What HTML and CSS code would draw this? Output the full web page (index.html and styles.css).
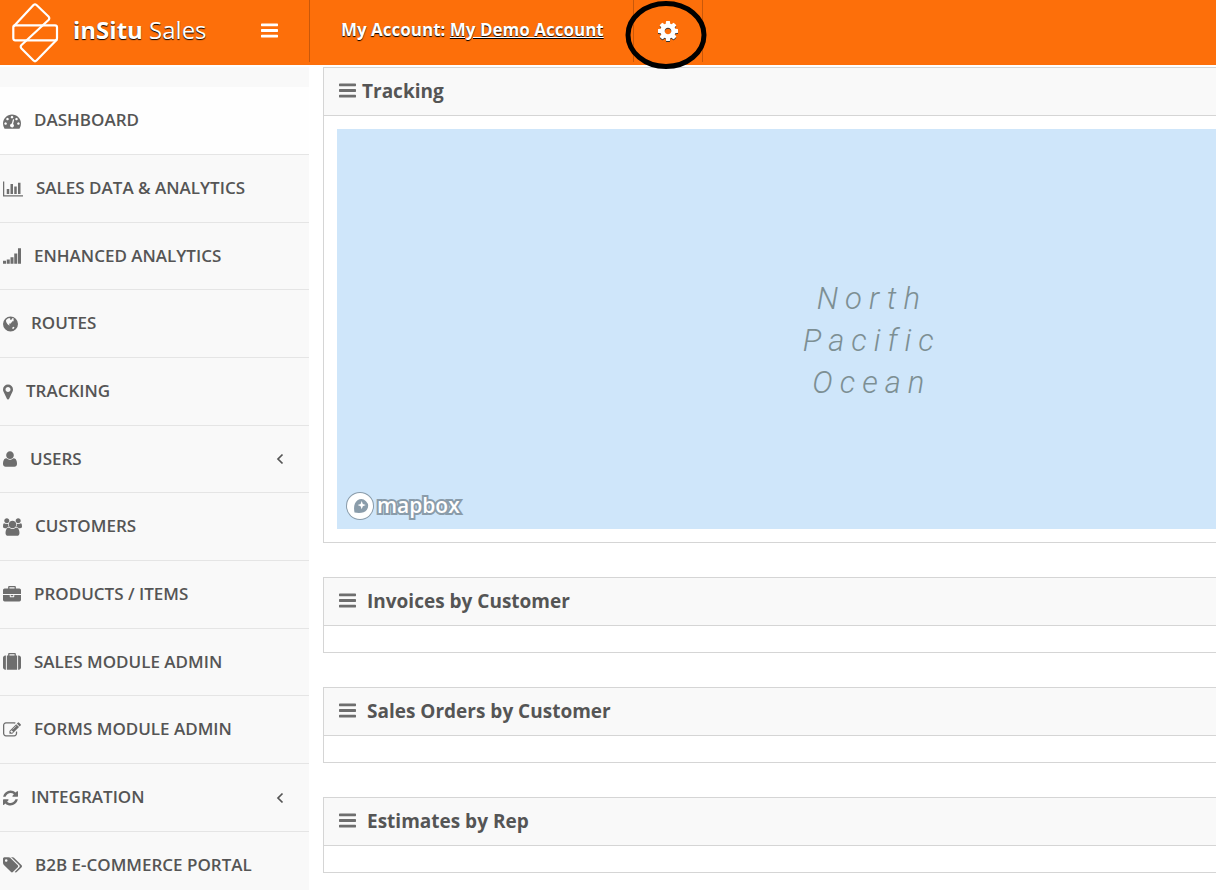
FILE: index.html
```html
<!DOCTYPE html>
<html lang="en">
<head>
<meta charset="utf-8">
<title>inSitu Sales</title>
<link rel="stylesheet" href="styles.css">
</head>
<body>
<svg class="sprite" aria-hidden="true">
  <symbol id="bars" viewBox="128 256 1536 1280"><path d="M1664 1344v128q0 26-19 45t-45 19h-1408q-26 0-45-19t-19-45v-128q0-26 19-45t45-19h1408q26 0 45 19t19 45zm0-512v128q0 26-19 45t-45 19h-1408q-26 0-45-19t-19-45v-128q0-26 19-45t45-19h1408q26 0 45 19t19 45zm0-512v128q0 26-19 45t-45 19h-1408q-26 0-45-19t-19-45v-128q0-26 19-45t45-19h1408q26 0 45 19t19 45z"/></symbol>
  <symbol id="angle" viewBox="0 0 8 12"><path d="M6.500 1.500 2 6l4.500 4.500" fill="none" stroke="currentColor" stroke-width="1.700"/></symbol>
</svg>

<header class="topbar">
  <div class="brand">
    <svg class="brand-logo" viewBox="0 0 48 60" aria-hidden="true"><g fill="none" stroke="#fff" stroke-width="2.200" stroke-linejoin="round" stroke-linecap="round"><path d="M3 23 22.500 2Q24 .8 25.500 2L37.500 13.500Q39 15.200 37.500 17L10.500 42Q9 43.700 10.500 45.500L22.500 57.500Q24 59 25.500 57.500L45.500 37"/><rect x="2.300" y="22.300" width="43.700" height="15" rx="2"/></g></svg>
    <a class="brand-name" href="#"><b>inSitu</b> Sales</a>
    <button class="menu-toggle" type="button" aria-label="Toggle menu"><svg class="bars" aria-hidden="true"><use href="#bars"/></svg></button>
  </div>
  <div class="account">My Account: <a href="#">My Demo Account</a></div>
  <button class="settings" type="button" aria-label="Settings">
    <svg class="cog" viewBox="128 128 1536 1536" aria-hidden="true"><path d="M1152 896q0-106-75-181t-181-75-181 75-75 181 75 181 181 75 181-75 75-181zm512-109v222q0 12-8 23t-20 13l-185 28q-19 54-39 91 35 50 107 138 10 12 10 25t-9 23q-27 37-99 108t-94 71q-12 0-26-9l-138-108q-44 23-91 38-16 136-29 186-7 28-36 28h-222q-14 0-24.500-8.500t-11.500-21.500l-28-184q-49-16-90-37l-141 107q-10 9-25 9-14 0-25-11-126-114-165-168-7-10-7-23 0-12 8-23 15-21 51-66.500t54-70.500q-27-50-41-99l-183-27q-13-2-21-12.500t-8-23.500v-222q0-12 8-23t19-13l186-28q14-46 39-92-40-57-107-138-10-12-10-24 0-10 9-23 26-36 98.500-107.500t94.500-71.500q13 0 26 10l138 107q44-23 91-38 16-136 29-186 7-28 36-28h222q14 0 24.500 8.500t11.500 21.500l28 184q49 16 90 37l142-107q9-9 24-9 13 0 25 10 129 119 165 170 7 8 7 22 0 12-8 23-15 21-51 66.500t-54 70.500q26 50 41 98l183 28q13 2 21 12.500t8 23.500z"/></svg>
    <svg class="marker-ring" viewBox="0 0 82 70" aria-hidden="true"><ellipse cx="41" cy="35" rx="38" ry="31.500" fill="none" stroke="#000" stroke-width="5"/></svg>
  </button>
</header>

<div class="layout">
  <nav class="sidebar" aria-label="Main">
    <ul class="menu">
      <li class="menu-item active"><a href="#"><svg class="icon w18" viewBox="0 0 1792 1792"><path d="M384 1152q0-53-37.500-90.500t-90.500-37.500-90.500 37.500-37.500 90.500 37.500 90.500 90.500 37.500 90.500-37.500 37.500-90.500zm192-448q0-53-37.500-90.500t-90.500-37.500-90.500 37.500-37.500 90.500 37.500 90.500 90.500 37.500 90.500-37.500 37.500-90.500zm428 481l101-382q6-26-7.500-48.500t-38.500-29.500-48 6.500-30 39.500l-101 382q-60 5-107 43.500t-63 98.500q-20 77 20 146t117 89 146-20 89-117q16-60-6-117t-72-91zm660-33q0-53-37.500-90.500t-90.500-37.500-90.500 37.500-37.500 90.500 37.500 90.500 90.500 37.500 90.500-37.500 37.500-90.500zm-640-640q0-53-37.500-90.500t-90.500-37.500-90.500 37.500-37.500 90.500 37.500 90.500 90.500 37.500 90.500-37.500 37.500-90.500zm448 192q0-53-37.500-90.500t-90.500-37.500-90.500 37.500-37.500 90.500 37.500 90.500 90.500 37.500 90.500-37.500 37.500-90.500zm320 448q0 261-141 483-19 29-54 29h-1402q-35 0-54-29-141-221-141-483 0-182 71-348t191-286 286-191 348-71 348 71 286 191 191 286 71 348z"/></svg><span>DASHBOARD</span></a></li>
      <li class="menu-item"><a href="#"><svg class="icon w20" viewBox="0 0 2048 1792"><path d="M640 896v512h-256v-512h256zm384-512v1024h-256v-1024h256zm1024 1152v128h-2048v-1536h128v1408h1920zm-640-896v768h-256v-768h256zm384-384v1152h-256v-1152h256z"/></svg><span>SALES DATA &amp; ANALYTICS</span></a></li>
      <li class="menu-item"><a href="#"><svg class="icon w18" viewBox="0 0 1792 1792"><path d="M0 1360h300v304H0zM373 1250h300v414H373zM746 1024h300v640H746zM1119 640h300v1024h-300zM1492 128h300v1536h-300z"/></svg><span>ENHANCED ANALYTICS</span></a></li>
      <li class="menu-item"><a href="#"><svg class="icon w15" viewBox="128 0 1536 1792"><path fill-rule="evenodd" d="M896 128a768 768 0 1 0 0 1536 768 768 0 0 0 0-1536zM440 480 620 340 780 270 880 350 850 440 960 480 1080 300 1180 290 1230 380 1190 480 1240 590 1130 640 1070 590 1050 710 940 760 900 860 780 850 740 930 820 1010 760 1050 600 930 510 790 440 650zM1080 1260 1220 1180 1300 1240 1220 1390 1100 1410z"/></svg><span>ROUTES</span></a></li>
      <li class="menu-item"><a href="#"><svg class="icon w10" viewBox="384 0 1024 1792"><path d="M1152 640q0-106-75-181t-181-75-181 75-75 181 75 181 181 75 181-75 75-181zm256 0q0 109-33 179l-364 774q-16 33-47.500 52t-67.500 19-67.500-19-46.500-52l-365-774q-33-70-33-179 0-212 150-362t362-150 362 150 150 362z"/></svg><span>TRACKING</span></a></li>
      <li class="menu-item"><a href="#"><svg class="icon w14" viewBox="192 0 1408 1792"><path d="M1600 1405q0 120-73 189.500t-194 69.500H459q-121 0-194-69.500T192 1405q0-53 3.500-103.500t14-109T236 1084t43-97.500 62-81 85.500-53.500T538 832q9 0 42 21.500t74.500 48 108 48T896 971t133.500-21.500 108-48 74.500-48 42-21.500q61 0 111.500 20t85.500 53.500 62 81 43 97.500 26.500 108.500 14 109 3.500 103.500zM1280 512q0 159-112.500 271.500T896 896 624.500 783.500 512 512t112.500-271.500T896 128t271.500 112.500T1280 512z"/></svg><span>USERS</span><svg class="angle" aria-hidden="true"><use href="#angle"/></svg></a></li>
      <li class="menu-item"><a href="#"><svg class="icon w19" viewBox="-64 0 1920 1792"><path d="M529 896q-162 5-265 128h-134q-82 0-138-40.500t-56-118.500q0-353 124-353 6 0 43.500 21t97.500 42.500 119 21.500q67 0 133-23-5 37-5 66 0 139 81 256zm1071 637q0 120-73 189.500t-194 69.500h-874q-121 0-194-69.500t-73-189.500q0-53 3.500-103.500t14-109 26.500-108.500 43-97.500 62-81 85.500-53.500 111.500-20q10 0 43 21.500t73 48 107 48 135 21.500 135-21.500 107-48 73-48 43-21.500q61 0 111.500 20t85.500 53.500 62 81 43 97.500 26.500 108.500 14 109 3.500 103.500zm-1024-1277q0 106-75 181t-181 75-181-75-75-181 75-181 181-75 181 75 75 181zm704 384q0 159-112.500 271.500t-271.500 112.500-271.500-112.500-112.500-271.500 112.500-271.500 271.500-112.500 271.500 112.500 112.500 271.500zm576 225q0 78-56 118.500t-138 40.500h-134q-103-123-265-128 81-117 81-256 0-29-5-66 66 23 133 23 59 0 119-21.500t97.500-42.500 43.500-21q124 0 124 353zm-128-609q0 106-75 181t-181 75-181-75-75-181 75-181 181-75 181 75 75 181z"/></svg><span>CUSTOMERS</span></a></li>
      <li class="menu-item"><a href="#"><svg class="icon w18" viewBox="0 0 1792 1792"><path d="M640 256h512v-128h-512v128zm1152 640v480q0 66-47 113t-113 47h-1472q-66 0-113-47t-47-113v-480h672v160q0 26 19 45t45 19h320q26 0 45-19t19-45v-160h672zm-768 0v128h-256v-128h256zm768-480v384h-1792v-384q0-66 47-113t113-47h352v-160q0-40 28-68t68-28h576q40 0 68 28t28 68v160h352q66 0 113 47t47 113z"/></svg><span>PRODUCTS / ITEMS</span></a></li>
      <li class="menu-item"><a href="#"><svg class="icon w18" viewBox="0 0 1792 1792"><path d="M640 256h512v-128h-512v128zm-352 0v1408h-64q-92 0-158-66t-66-158v-960q0-92 66-158t158-66h64zm1120 0v1408h-1024v-1408h128v-160q0-40 28-68t68-28h576q40 0 68 28t28 68v160h128zm384 224v960q0 92-66 158t-158 66h-64v-1408h64q92 0 158 66t66 158z"/></svg><span>SALES MODULE ADMIN</span></a></li>
      <li class="menu-item"><a href="#"><svg class="icon w18" viewBox="0 0 1792 1792"><path d="M888 1184l116-116-152-152-116 116v56h96v96h56zm440-720q-16-16-33 1l-350 350q-17 17-1 33t33-1l350-350q17-17 1-33zm80 594v190q0 119-84.500 203.500t-203.500 84.500h-832q-119 0-203.500-84.500t-84.500-203.500v-832q0-119 84.500-203.500t203.500-84.500h832q63 0 117 25 15 7 18 23 3 17-9 29l-49 49q-14 14-32 8-23-6-45-6h-832q-66 0-113 47t-47 113v832q0 66 47 113t113 47h832q66 0 113-47t47-113v-126q0-13 9-22l64-64q15-15 35-7t20 29zm-96-738l288 288-672 672h-288v-288zm444 132l-92 92-288-288 92-92q28-28 68-28t68 28l152 152q28 28 28 68t-28 68z"/></svg><span>FORMS MODULE ADMIN</span></a></li>
      <li class="menu-item"><a href="#"><svg class="icon w15" viewBox="128 0 1536 1792"><path d="M1639 1056q0 5-1 7-64 268-268 434.500t-478 166.500q-146 0-282.500-55t-243.500-157l-129 129q-19 19-45 19t-45-19-19-45v-448q0-26 19-45t45-19h448q26 0 45 19t19 45-19 45l-137 137q71 66 161 102t187 36q134 0 250-65t186-179q11-17 53-117 8-23 30-23h192q13 0 22.500 9.500t9.500 22.500zm25-800v448q0 26-19 45t-45 19h-448q-26 0-45-19t-19-45 19-45l138-138q-148-137-349-137-134 0-250 65t-186 179q-11 17-53 117-8 23-30 23h-199q-13 0-22.500-9.500t-9.500-22.500v-7q65-268 270-434.500t480-166.500q146 0 284 55.500t245 156.500l130-129q19-19 45-19t45 19 19 45z"/></svg><span>INTEGRATION</span><svg class="angle" aria-hidden="true"><use href="#angle"/></svg></a></li>
      <li class="menu-item"><a href="#"><svg class="icon w19" viewBox="0 0 1899 1792"><path d="M448 448q0-53-37.500-90.500t-90.500-37.500-90.500 37.500-37.500 90.500 37.500 90.500 90.500 37.500 90.500-37.500 37.500-90.500zm1067 576q0 53-37 90l-491 492q-39 37-91 37-53 0-90-37l-715-716q-38-37-64.500-101t-26.500-117v-416q0-52 38-90t90-38h416q53 0 117 26.500t102 64.500l715 714q37 39 37 91zm384 0q0 53-37 90l-491 492q-39 37-91 37-36 0-59-14t-53-45l470-470q37-37 37-90 0-52-37-91l-715-714q-38-38-102-64.500t-117-26.500h224q53 0 117 26.500t102 64.500l715 714q37 39 37 91z"/></svg><span>B2B E-COMMERCE PORTAL</span></a></li>
    </ul>
  </nav>

  <main class="content">
    <section class="panel">
      <h2 class="panel-title snug"><svg class="bars" aria-hidden="true"><use href="#bars"/></svg>Tracking</h2>
      <div class="panel-body with-map">
        <div class="map">
          <p class="ocean">North<br>Pacific<br>Ocean</p>
          <a class="mapbox" href="#">
            <svg class="mapbox-mark" viewBox="0 0 28 28" aria-hidden="true"><circle cx="14" cy="14" r="13" fill="#fff" stroke="#8a9caa" stroke-width="2"/><path d="M8.500 20.500C7.300 14.500 8.600 10.500 11.500 8.300a6.800 6.800 0 0 1 9.400 9.400C18.700 20.500 14.500 21.700 8.500 20.500z" fill="#8a9caa" stroke="none"/><path d="m15.700 9 1.100 3 3 1.100-3 1.100-1.100 3-1.100-3-3-1.100 3-1.100z" fill="#fff"/></svg>
            <span>mapbox</span>
          </a>
        </div>
      </div>
    </section>
    <section class="panel">
      <h2 class="panel-title"><svg class="bars" aria-hidden="true"><use href="#bars"/></svg>Invoices by Customer</h2>
      <div class="panel-body"></div>
    </section>
    <section class="panel">
      <h2 class="panel-title"><svg class="bars" aria-hidden="true"><use href="#bars"/></svg>Sales Orders by Customer</h2>
      <div class="panel-body"></div>
    </section>
    <section class="panel">
      <h2 class="panel-title"><svg class="bars" aria-hidden="true"><use href="#bars"/></svg>Estimates by Rep</h2>
      <div class="panel-body"></div>
    </section>
  </main>
</div>
</body>
</html>
```
FILE: styles.css
```css
* { box-sizing: border-box; }

html { overflow: hidden; }

body {
  margin: 0;
  background: #fff;
  color: #555;
  font-family: "Open Sans", "Noto Sans", sans-serif;
  font-size: 17px;
}

a { color: inherit; text-decoration: none; }

button {
  padding: 0;
  border: 0;
  background: none;
  color: inherit;
  cursor: pointer;
}

svg { display: block; flex: none; fill: currentColor; }

.sprite { position: absolute; width: 0; height: 0; }

.bars { width: 17px; height: 15px; }

/* Top bar */
.topbar {
  display: flex;
  align-items: flex-start;
  height: 65px;
  background: #fd6f0a;
  color: #fff;
  text-shadow: 0 1px 1px #000;
}

.brand {
  display: flex;
  align-items: center;
  width: 310px;
  height: 62px;
  padding: 3px 31px 0 11px;
  border-right: 1px solid #c9580a;
}

.brand-logo { width: 48px; height: 60px; }

.brand-name {
  flex: 1;
  padding: 0 0 6px 14px;
  font-size: 24px;
  line-height: 34px;
}

.menu-toggle { padding-bottom: 4px; }

.account {
  padding: 0 29px 0 31px;
  font-weight: 700;
  line-height: 60px;
}

.account a { text-decoration: underline; }

.settings {
  position: relative;
  display: flex;
  justify-content: center;
  align-items: center;
  width: 70px;
  height: 62px;
  border: solid #c9580a;
  border-width: 0 1px;
}

.cog { width: 20px; height: 20px; filter: drop-shadow(0 1px 0 #333); }

.marker-ring {
  position: absolute;
  top: 0;
  left: -9px;
  width: 82px;
  height: 70px;
}

/* Page columns */
.layout {
  display: flex;
  gap: 14px;
  padding-top: 2px;
}

.sidebar {
  flex: none;
  width: 309px;
  padding-top: 20px;
  background: #f9f9f9;
}

.menu { margin: 0; padding: 0; list-style: none; }

.menu-item {
  height: 68px;
  border-bottom: 1px solid #e5e5e5;
}

.menu-item:nth-child(3n) { height: 67px; }

.menu-item.active { background: #fefefe; }

.menu-item a {
  display: flex;
  align-items: center;
  gap: 13px;
  height: 100%;
  padding: 0 25px 0 3px;
  font-weight: 600;
}

.menu-item span { flex: 1; padding-bottom: 2px; }

.icon { height: 18px; color: #6e6e6e; }
.w10 { width: 10px; }
.w14 { width: 14px; }
.w15 { width: 15px; }
.w18 { width: 18px; }
.w19 { width: 19px; }
.w20 { width: 20px; }

.angle { width: 8px; height: 12px; }

/* Panels */
.content {
  flex: 1;
  min-width: 0;
  display: flex;
  flex-direction: column;
  gap: 34px;
}

.panel {
  border: 1px solid #d5d5d5;
  border-right: 0;
}

.panel-title {
  display: flex;
  align-items: center;
  gap: 11px;
  height: 48px;
  margin: 0;
  padding: 0 0 2px 15px;
  border-bottom: 1px solid #d5d5d5;
  background: #f9f9f9;
  font-size: 19px;
  font-weight: 700;
}

.panel-title.snug { gap: 6px; }

.panel-title .bars { color: #6e6e6e; }

.panel-body { min-height: 26px; }

.panel-body.with-map { padding: 13px 0 13px 13px; }

/* Map */
.map {
  position: relative;
  height: 400px;
  background: #cfe6fa;
}

.ocean {
  position: absolute;
  top: 149px;
  left: 53%;
  margin: 0;
  color: #7d8f93;
  font-family: Roboto, sans-serif;
  font-size: 31px;
  font-style: italic;
  font-weight: 300;
  letter-spacing: 7px;
  line-height: 42px;
  text-align: center;
}

.mapbox {
  position: absolute;
  bottom: 8px;
  left: 9px;
  display: flex;
  align-items: center;
  gap: 3px;
  color: #fff;
  font-size: 21px;
  font-weight: 600;
  line-height: 28px;
  -webkit-text-stroke: 4px #8a9caa;
  paint-order: stroke fill;
}

.mapbox span { padding-bottom: 2px; }

.mapbox-mark { width: 28px; height: 28px; }
```
